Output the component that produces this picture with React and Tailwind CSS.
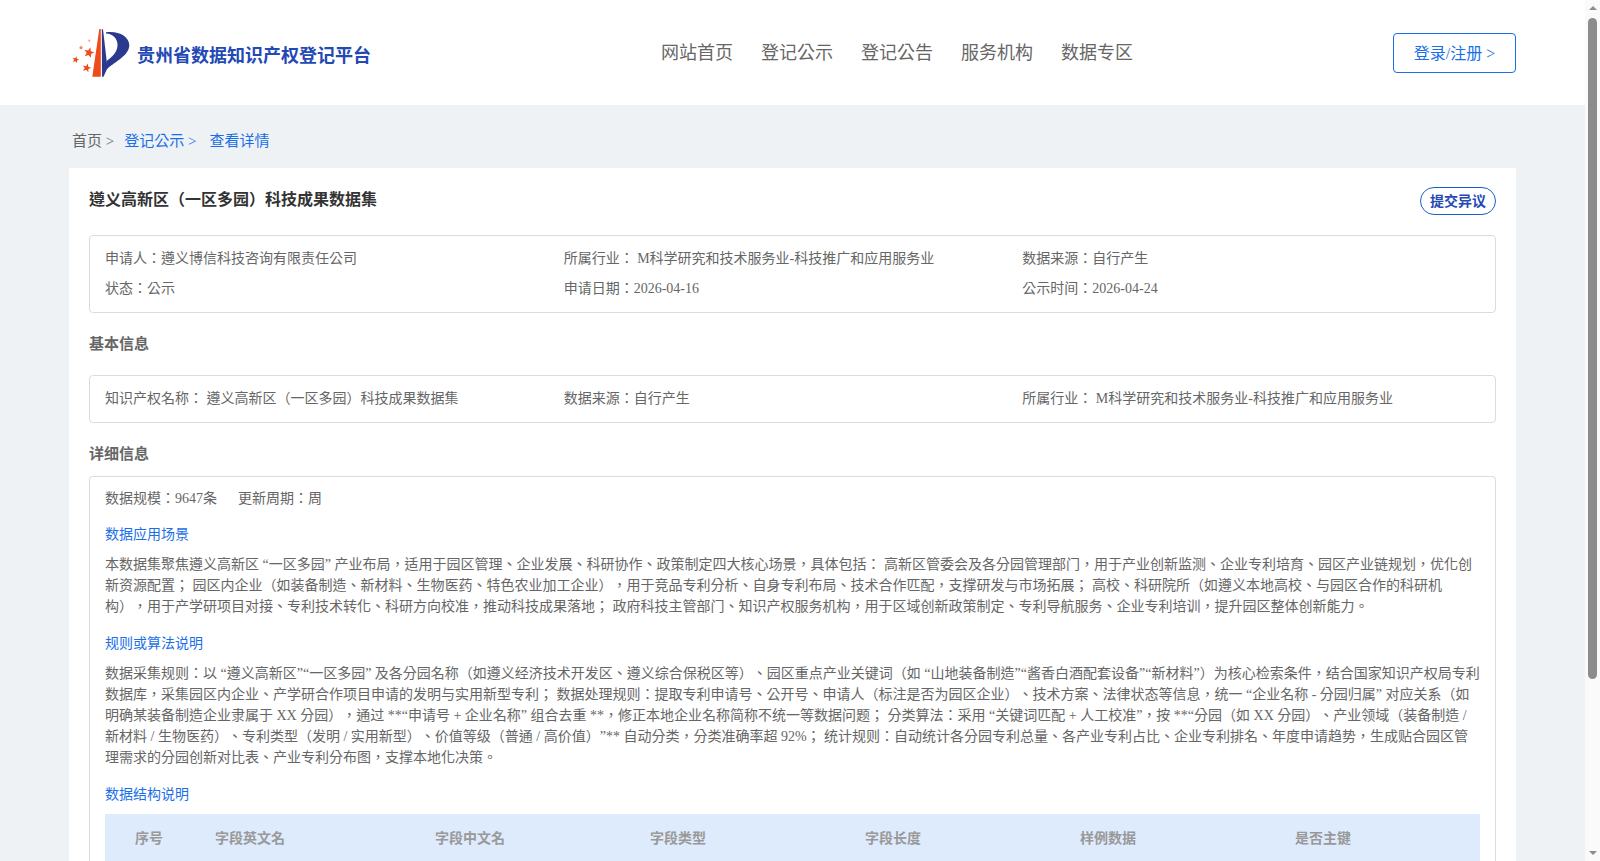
const info1 = [
  ["申请人：遵义博信科技咨询有限责任公司", "所属行业： M科学研究和技术服务业-科技推广和应用服务业", "数据来源：自行产生"],
  ["状态：公示", "申请日期：2026-04-16", "公示时间：2026-04-24"],
];
const info2 = ["知识产权名称： 遵义高新区（一区多园）科技成果数据集", "数据来源：自行产生", "所属行业： M科学研究和技术服务业-科技推广和应用服务业"];
const cols = ["字段中文名", "字段类型", "字段长度", "样例数据", "是否主键"];

function star(cx, cy, r) {
  const pts = [];
  for (let i = 0; i < 10; i++) {
    const a = -Math.PI / 2 + (i * Math.PI) / 5 + 0.25;
    const rr = i % 2 === 0 ? r : r * 0.42;
    pts.push(`${(cx + rr * Math.cos(a)).toFixed(2)},${(cy + rr * Math.sin(a)).toFixed(2)}`);
  }
  return pts.join(" ");
}

function Logo() {
  return (
    <svg width="60" height="50" viewBox="0 0 60 50" className="shrink-0">
      <path d="M27.3 1 L28.8 1 L28.8 48.7 L20.3 48.7 Z" fill="#ee4a1c" />
      <path d="M29.8 1.3 L31 1.3 L35.5 40 L31.5 48.7 L30 48.7 Z" fill="#2b3a8f" />
      <path d="M34 4.3 C46 2.5 57 8 57.3 17 C57.5 27 44 33 35 41 L34.5 33 C40 29 46 24 45.5 16 C45 10 41 6 34 5.5 Z" fill="#2b3a8f" />
      <polygon points={star(17, 24.7, 5.5)} fill="#ee4a1c" />
      <polygon points={star(3.7, 31.7, 3.6)} fill="#ee4a1c" />
      <polygon points={star(14.7, 40, 4.6)} fill="#ee4a1c" />
      <circle cx="9" cy="19.7" r="1.6" fill="#f28a6a" />
      <circle cx="17.3" cy="12.7" r="1.1" fill="#f2a58c" />
    </svg>
  );
}

function SectionLink({ children, className = "" }) {
  return <div className={`text-[14px] leading-[21px] text-[#1a6fe8] ${className}`}>{children}</div>;
}

export default function App() {
  return (
    <div className="flex h-[861px] overflow-hidden bg-white font-['Liberation_Serif','Noto_Sans_CJK_TC',serif] [text-spacing-trim:space-all]">
      <div className="min-w-0 flex-1 bg-[#eff2f5]">
        <header className="flex h-[105px] items-center bg-white pl-[72px] pr-[69px]">
          <div className="flex w-[500px] items-center">
            <Logo />
            <span className="ml-[5px] mt-[8px] text-[18px] font-bold text-[#2349b5]">贵州省数据知识产权登记平台</span>
          </div>
          <nav className="ml-[89px] mt-[2px] flex gap-[28px] text-[18px] text-[#666666]">
            <span>网站首页</span><span>登记公示</span><span>登记公告</span><span>服务机构</span><span>数据专区</span>
          </nav>
          <div className="ml-auto flex h-[40px] w-[123px] items-center justify-center rounded-[4px] border border-[#1a6fe8] pt-[2px] text-[16px] text-[#1a6fe8]">登录/注册 &gt;</div>
        </header>
        <div className="flex h-[63px] items-center pl-[72px] pt-[10px] text-[15px] text-[#666666]">
          <span>首页 &gt;</span>
          <span className="ml-[10px] text-[#1a6fe8]">登记公示 &gt;</span>
          <span className="ml-[13px] text-[#1a6fe8]">查看详情</span>
        </div>
        <main className="mx-[69px] bg-white px-[20px] pt-[20px]">
          <div className="flex items-start justify-between">
            <h1 className="text-[16px] font-bold leading-[24px] text-[#333333]">遵义高新区（一区多园）科技成果数据集</h1>
            <div className="-mt-px flex h-[28px] w-[76px] items-center justify-center rounded-[14px] border border-[#1a5fc8] text-[14px] font-bold text-[#2349b5]">提交异议</div>
          </div>
          <div className="mt-[20px] flex flex-col gap-[9px] rounded-[4px] border border-[#dcdcdc] pb-[13px] pl-[15px] pr-[14px] pt-[12px] text-[14px] leading-[21px] text-[#666666]">
            {info1.map((row, i) => (
              <div key={i} className="grid grid-cols-3">
                {row.map((t) => <div key={t}>{t}</div>)}
              </div>
            ))}
          </div>
          <h2 className="mt-[20px] text-[15px] font-bold leading-[22px] text-[#666666]">基本信息</h2>
          <div className="mt-[20px] grid grid-cols-3 rounded-[4px] border border-[#dcdcdc] pb-[13px] pl-[15px] pr-[14px] pt-[12px] text-[14px] leading-[21px] text-[#666666]">
            {info2.map((t) => <div key={t}>{t}</div>)}
          </div>
          <h2 className="mt-[20px] text-[15px] font-bold leading-[22px] text-[#666666]">详细信息</h2>
          <div className="mt-[11px] rounded-t-[4px] border border-b-0 border-[#dcdcdc] px-[15px] pt-[11px] text-[14px] leading-[21px] text-[#666666]">
            <div className="flex gap-[21px]"><span>数据规模：9647条</span><span>更新周期：周</span></div>
            <SectionLink className="mt-[15px]">数据应用场景</SectionLink>
            <p className="mt-[9px]">本数据集聚焦遵义高新区 “一区多园” 产业布局，适用于园区管理、企业发展、科研协作、政策制定四大核心场景，具体包括： 高新区管委会及各分园管理部门，用于产业创新监测、企业专利培育、园区产业链规划，优化创新资源配置； 园区内企业（如装备制造、新材料、生物医药、特色农业加工企业），用于竞品专利分析、自身专利布局、技术合作匹配，支撑研发与市场拓展； 高校、科研院所（如遵义本地高校、与园区合作的科研机构），用于产学研项目对接、专利技术转化、科研方向校准，推动科技成果落地； 政府科技主管部门、知识产权服务机构，用于区域创新政策制定、专利导航服务、企业专利培训，提升园区整体创新能力。</p>
            <SectionLink className="mt-[16px]">规则或算法说明</SectionLink>
            <p className="mt-[9px]">数据采集规则：以 “遵义高新区”“一区多园” 及各分园名称（如遵义经济技术开发区、遵义综合保税区等）、园区重点产业关键词（如 “山地装备制造”“酱香白酒配套设备”“新材料”）为核心检索条件，结合国家知识产权局专利数据库，采集园区内企业、产学研合作项目申请的发明与实用新型专利； 数据处理规则：提取专利申请号、公开号、申请人（标注是否为园区企业）、技术方案、法律状态等信息，统一 “企业名称 - 分园归属” 对应关系（如明确某装备制造企业隶属于 XX 分园），通过 **“申请号 + 企业名称” 组合去重 **，修正本地企业名称简称不统一等数据问题； 分类算法：采用 “关键词匹配 + 人工校准”，按 **“分园（如 XX 分园）、产业领域（装备制造 / 新材料 / 生物医药）、专利类型（发明 / 实用新型）、价值等级（普通 / 高价值）”** 自动分类，分类准确率超 92%； 统计规则：自动统计各分园专利总量、各产业专利占比、企业专利排名、年度申请趋势，生成贴合园区管理需求的分园创新对比表、产业专利分布图，支撑本地化决策。</p>
            <SectionLink className="mt-[16px]">数据结构说明</SectionLink>
            <div className="mt-[9px] flex h-[48px] items-start overflow-hidden bg-[#deebfd] pt-[14px] text-[14px] font-bold text-[#999999]">
              <div className="w-[110px] shrink-0 pl-[30px]">序号</div>
              <div className="w-[220px] shrink-0">字段英文名</div>
              {cols.map((c) => <div key={c} className="w-[215px] shrink-0">{c}</div>)}
            </div>
          </div>
        </main>
      </div>
      <div className="flex w-[15px] shrink-0 flex-col items-center bg-[#fafafa]">
        <div className="mt-[6px] h-0 w-0 border-x-[4px] border-b-[4px] border-x-transparent border-b-[#8c8c8c]" />
        <div className="mt-[8px] h-[661px] w-[9px] rounded-full bg-[#8c8c8c]" />
        <div className="mb-[6px] mt-auto h-0 w-0 border-x-[4px] border-t-[4px] border-x-transparent border-t-[#8c8c8c]" />
      </div>
    </div>
  );
}
